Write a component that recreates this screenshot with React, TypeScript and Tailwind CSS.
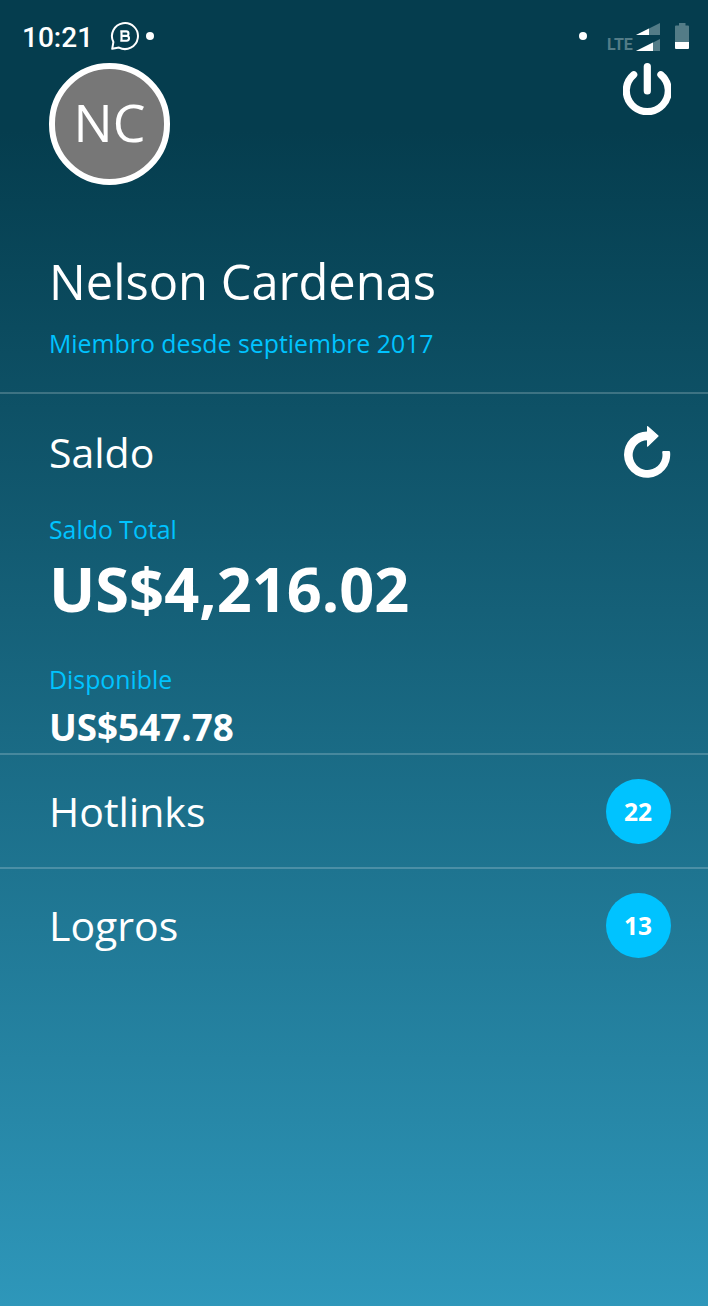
import type { ReactNode } from "react"

function BusinessChatIcon() {
  return (
    <svg width="30" height="30" viewBox="0 0 30 30" fill="none" stroke="white">
      <path d="M2.2 27.8 L3.4 21 A13 13 0 1 1 9 26.6 Z" strokeWidth="2" strokeLinejoin="round" />
      <path d="M11.5 10.4 V19.7 M10.3 10.4 H16.2 A2.25 2.25 0 0 1 16.2 14.9 H11.5 M16.2 14.9 H16.6 A2.4 2.4 0 0 1 16.6 19.7 H10.3" strokeWidth="2.1" />
    </svg>
  )
}

function SignalIcon() {
  return (
    <svg width="24" height="28" viewBox="0 0 24 28">
      <path d="M0 12 L24 0 V12 Z" fill="#537c87" />
      <path d="M0 12 L13 5.5 V12 Z" fill="white" />
      <path d="M0 28 L24 16 V28 Z" fill="#537c87" />
      <path d="M0 28 L17 19.5 V28 Z" fill="white" />
    </svg>
  )
}

function BatteryIcon() {
  return (
    <svg width="14" height="26" viewBox="0 0 14 26">
      <path d="M4 0 H10.5 V2.5 H13 Q14 2.5 14 3.5 V19 H0 V3.5 Q0 2.5 1 2.5 H4 Z" fill="#537c87" />
      <path d="M0 19 H14 V25 Q14 26 13 26 H1 Q0 26 0 25 Z" fill="white" />
    </svg>
  )
}

function PowerIcon() {
  return (
    <svg width="48" height="52" viewBox="0 0 48 52" fill="none" stroke="white" strokeWidth="7.2" strokeLinecap="round">
      <path d="M10.7 11.7 A21 21 0 1 0 37.9 11.7" />
      <path d="M24.3 3.7 V28" />
    </svg>
  )
}

function RefreshIcon() {
  return (
    <svg width="47" height="54" viewBox="0 0 47 54">
      <path
        d="M23.3 6.5 A23.1 23.1 0 1 0 46.1 27.2 Q46.1 25.9 44.8 25.9 H39.3 Q38.2 25.9 38.2 27.2 A14.9 14.9 0 1 1 23.3 15.2 Z"
        fill="white"
      />
      <path d="M23.6 1.6 L34 11 L23.6 21 Z" fill="white" stroke="white" strokeWidth="1.2" strokeLinejoin="round" />
    </svg>
  )
}

function StatusBar() {
  return (
    <div className="flex h-[63px] items-start pl-[22px] pr-[19px] text-white">
      <span className="mt-[23px] w-[88px] font-['Roboto',sans-serif] text-[28px] leading-[30px] font-medium">10:21</span>
      <div className="mt-[21px]">
        <BusinessChatIcon />
      </div>
      <span className="mt-8 ml-1.5 size-2 rounded-full bg-white" />
      <span className="mt-8 ml-auto size-2 rounded-full bg-white" />
      <span className="mt-9 ml-5 w-[29px] font-['Roboto',sans-serif] text-base leading-[18px] font-bold text-[#537c87]">LTE</span>
      <div className="mt-[23px]">
        <SignalIcon />
      </div>
      <div className="mt-[23px] ml-[15px]">
        <BatteryIcon />
      </div>
    </div>
  )
}

function Label({ children }: { children: ReactNode }) {
  return <p className="text-[24.85px] leading-9 text-[#00c3ff]">{children}</p>
}

function CountRow({ title, count }: { title: string; count: number }) {
  return (
    <div className="flex h-[114px] items-center justify-between border-t-2 border-white/20 pr-[37px] pl-[49px]">
      <h2 className="text-[41px] leading-[56px]">{title}</h2>
      <span className="flex size-[65px] items-center justify-center rounded-full bg-[#00c3ff] pt-0.5 pr-px text-[24.5px] leading-none font-bold">
        {count}
      </span>
    </div>
  )
}

const links = [
  { title: "Hotlinks", count: 22 },
  { title: "Logros", count: 13 },
]

export default function App() {
  return (
    <div className="h-[1306px] w-[708px] overflow-hidden bg-linear-to-b from-[#053d4e] from-10% to-[#2e97ba] font-['Open_Sans',sans-serif] text-white">
      <StatusBar />

      <header className="h-[329px] pr-[37px] pl-[49px]">
        <div className="flex items-start justify-between">
          <div className="flex h-[122px] w-[121px] items-center justify-center rounded-full border-6 border-white bg-[#777777] pb-1 text-[52px] leading-none">
            NC
          </div>
          <button type="button" aria-label="Cerrar sesión">
            <PowerIcon />
          </button>
        </div>
        <h1 className="mt-16 text-[48.8px] leading-[64px]">Nelson Cardenas</h1>
        <div className="mt-3">
          <Label>Miembro desde septiembre 2017</Label>
        </div>
      </header>

      <section className="h-[361px] border-t-2 border-white/20 pr-[37px] pl-[49px]">
        <div className="mb-0.5 flex h-[115px] items-center justify-between">
          <h2 className="text-[41px] leading-[56px]">Saldo</h2>
          <button type="button" aria-label="Actualizar saldo">
            <RefreshIcon />
          </button>
        </div>
        <Label>Saldo Total</Label>
        <p className="mt-px text-[61.3px] leading-[80px] font-bold">US$4,216.02</p>
        <div className="mt-[33px]">
          <Label>Disponible</Label>
        </div>
        <p className="mt-1 text-[36.8px] leading-[53px] font-bold">US$547.78</p>
      </section>

      {links.map(link => (
        <CountRow key={link.title} title={link.title} count={link.count} />
      ))}
    </div>
  )
}
